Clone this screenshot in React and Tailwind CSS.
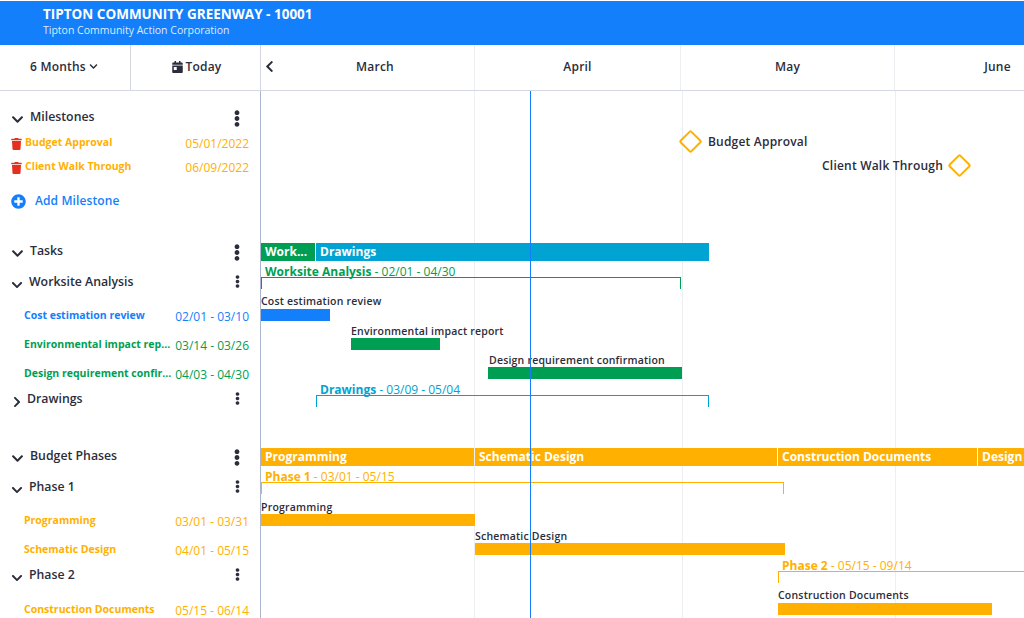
import { FaCalendarDay, FaChevronDown, FaChevronLeft, FaChevronRight, FaEllipsisV, FaPlusCircle, FaTrash } from 'react-icons/fa';

function Section({ open = true, title, size = 'big', className = '' }) {
  const big = size === 'big';
  return (
    <div className={`flex h-6 items-center pl-[11px] pr-[15px] ${className}`}>
      {open ? (
        <FaChevronDown className={big ? 'mr-[6px] mt-[2px] h-[13px] w-[13px] text-[#2b2d3a]' : 'mr-[6px] mt-[3px] h-[12px] w-[12px] text-[#2b2d3a]'} />
      ) : (
        <FaChevronRight className="mr-[4px] mt-[3px] h-[12px] w-[12px] text-[#2b2d3a]" />
      )}
      <span className="mb-[1px] flex-1 text-[12.3px] font-semibold text-[#2b2d3a]">{title}</span>
      <span className="flex w-4 justify-center">
        <FaEllipsisV className={big ? 'h-[17px] w-[17px] text-[#2b2d3a]' : 'mb-[3px] h-[13px] w-[13px] text-[#2b2d3a]'} />
      </span>
    </div>
  );
}

function Item({ name, dates, color, className = '' }) {
  return (
    <div className={`flex h-6 items-center justify-between pl-[24px] pr-[11px] ${color} ${className}`}>
      <span className="mb-[1px] whitespace-nowrap text-[10.5px] font-bold">{name}</span>
      <span className="mt-[2px] text-[12px]">{dates}</span>
    </div>
  );
}

function Milestone({ name, date, className = '' }) {
  return (
    <div className={`flex h-6 items-center justify-between px-[11px] text-[#ffb000] ${className}`}>
      <span className="flex items-center">
        <FaTrash className="mr-[3px] mt-[2px] h-[12px] w-[11px] text-[#e3301f]" />
        <span className="text-[10.5px] font-bold">{name}</span>
      </span>
      <span className="mt-[1px] text-[12px]">{date}</span>
    </div>
  );
}

function Sidebar() {
  return (
    <aside className="h-full w-[261px] shrink-0 border-r border-[#aab6cf] pt-[15px]">
      <Section title="Milestones" />
      <Milestone name="Budget Approval" date="05/01/2022" className="mt-[1px]" />
      <Milestone name="Client Walk Through" date="06/09/2022" />
      <div className="mt-[10px] flex h-6 items-center pl-[11px]">
        <FaPlusCircle className="mr-[9px] h-[15px] w-[15px] text-[#147ffb]" />
        <span className="text-[12px] font-semibold tracking-[0.1px] text-[#147ffb]">Add Milestone</span>
      </div>

      <Section title="Tasks" className="mt-[27px]" />
      <Section title="Worksite Analysis" size="small" className="mt-[7px]" />
      <Item name="Cost estimation review" dates="02/01 - 03/10" color="text-[#147ffb]" className="mt-[9px]" />
      <Item name="Environmental impact rep..." dates="03/14 - 03/26" color="text-[#009e52]" className="mt-[5px]" />
      <Item name="Design requirement confir..." dates="04/03 - 04/30" color="text-[#009e52]" className="mt-[5px]" />
      <Section open={false} title="Drawings" size="small" className="mt-[2px]" />

      <Section title="Budget Phases" className="mt-[33px]" />
      <Section title="Phase 1" size="small" className="mt-[7px]" />
      <Item name="Programming" dates="03/01 - 03/31" color="text-[#ffb000]" className="mt-[9px]" />
      <Item name="Schematic Design" dates="04/01 - 05/15" color="text-[#ffb000]" className="mt-[5px]" />
      <Section title="Phase 2" size="small" className="mt-[2px]" />
      <Item name="Construction Documents" dates="05/15 - 06/14" color="text-[#ffb000]" className="mt-[10px]" />
    </aside>
  );
}

function Bar({ className }) {
  return <div className={`absolute h-[12px] ${className}`} />;
}

function Band({ label, className }) {
  return (
    <div className={`flex h-full shrink-0 items-center overflow-hidden whitespace-nowrap pl-[4px] text-[12px] font-bold text-white ${className}`}>
      {label}
    </div>
  );
}

function TaskLabel({ children, className }) {
  return <div className={`absolute whitespace-nowrap text-[10.5px] font-semibold leading-[14px] tracking-[0.2px] text-[#2b2d3a] ${className}`}>{children}</div>;
}

function GroupLabel({ name, dates, className }) {
  return (
    <div className={`absolute whitespace-nowrap text-[12px] leading-[14px] ${className}`}>
      <span className="font-bold">{name}</span> - {dates}
    </div>
  );
}

function Bracket({ className }) {
  return <div className={`absolute h-[12px] border-x border-t ${className}`} />;
}

function Diamond({ className }) {
  return <div className={`absolute h-[17px] w-[17px] rotate-45 rounded-[2px] border-2 border-[#ffb000] bg-white ${className}`} />;
}

function Chart() {
  return (
    <div className="relative h-full flex-1 overflow-hidden">
      <div className="absolute left-[213px] top-0 h-full w-px bg-[#eceef2]" />
      <div className="absolute left-[421px] top-0 h-full w-px bg-[#eceef2]" />
      <div className="absolute left-[634px] top-0 h-full w-px bg-[#eceef2]" />

      <Diamond className="left-[421px] top-[42px]" />
      <div className="absolute left-[447px] top-[42px] whitespace-nowrap text-[12px] font-semibold leading-[18px] tracking-[0.2px] text-[#2b2d3a]">Budget Approval</div>
      <div className="absolute right-[81px] top-[66px] whitespace-nowrap text-[12px] font-semibold leading-[18px] tracking-[0.2px] text-[#2b2d3a]">Client Walk Through</div>
      <Diamond className="left-[690px] top-[66px]" />

      <div className="absolute left-0 top-[152px] flex h-[18px] gap-px">
        <Band label="Work..." className="w-[54px] bg-[#009e52]" />
        <Band label="Drawings" className="w-[393px] bg-[#00a3d1]" />
      </div>

      <GroupLabel name="Worksite Analysis" dates="02/01 - 04/30" className="left-[4px] top-[174px] text-[#009e52]" />
      <Bracket className="left-0 top-[186px] w-[420px] border-[#009e52]" />
      <TaskLabel className="left-0 top-[203px]">Cost estimation review</TaskLabel>
      <Bar className="left-0 top-[218px] w-[69px] bg-[#147ffb]" />
      <TaskLabel className="left-[90px] top-[233px]">Environmental impact report</TaskLabel>
      <Bar className="left-[90px] top-[247px] w-[89px] bg-[#009e52]" />
      <TaskLabel className="left-[228px] top-[262px]">Design requirement confirmation</TaskLabel>
      <Bar className="left-[227px] top-[276px] w-[194px] bg-[#009e52]" />
      <GroupLabel name="Drawings" dates="03/09 - 05/04" className="left-[59px] top-[292px] text-[#00a3d1]" />
      <Bracket className="left-[55px] top-[304px] w-[393px] border-[#00a3d1]" />

      <div className="absolute left-0 top-[357px] flex h-[18px] gap-px">
        <Band label="Programming" className="w-[213px] bg-[#ffb000]" />
        <Band label="Schematic Design" className="w-[302px] bg-[#ffb000]" />
        <Band label="Construction Documents" className="w-[199px] bg-[#ffb000]" />
        <Band label="Design" className="w-[60px] bg-[#ffb000]" />
      </div>

      <GroupLabel name="Phase 1" dates="03/01 - 05/15" className="left-[4px] top-[379px] text-[#ffb000]" />
      <Bracket className="left-0 top-[391px] w-[523px] border-[#ffb000]" />
      <TaskLabel className="left-0 top-[409px]">Programming</TaskLabel>
      <Bar className="left-0 top-[423px] w-[214px] bg-[#ffb000]" />
      <TaskLabel className="left-[214px] top-[438px]">Schematic Design</TaskLabel>
      <Bar className="left-[214px] top-[452px] w-[310px] bg-[#ffb000]" />
      <GroupLabel name="Phase 2" dates="05/15 - 09/14" className="left-[521px] top-[468px] text-[#ffb000]" />
      <Bracket className="left-[517px] top-[480px] w-[400px] border-[#ffb000]" />
      <TaskLabel className="left-[517px] top-[497px]">Construction Documents</TaskLabel>
      <Bar className="left-[517px] top-[512px] w-[214px] bg-[#ffb000]" />

      <div className="absolute left-[269px] top-0 h-full w-px bg-[#147ffb]" />
    </div>
  );
}

export default function App() {
  return (
    <div className="flex h-[618px] w-[1024px] flex-col overflow-hidden bg-white font-['Open_Sans',sans-serif]">
      <header className="mt-px flex h-[44px] shrink-0 flex-col justify-center bg-[#147ffb] pb-[4px] pl-[43px] text-white">
        <div className="text-[13.5px] font-bold leading-[18px]">TIPTON COMMUNITY GREENWAY - 10001</div>
        <div className="text-[10.5px] leading-[14px] text-[#dcebff]">Tipton Community Action Corporation</div>
      </header>

      <div className="flex h-[46px] shrink-0 border-b border-[#d5d8e2] text-[12px] font-semibold tracking-[0.2px] text-[#2b2d3a]">
        <div className="flex w-[131px] items-center justify-center border-r border-[#d5d8e2] pb-[2px] pr-[2px]">
          6 Months
          <FaChevronDown className="ml-[3px] h-[9px] w-[9px]" />
        </div>
        <div className="flex w-[130px] items-center justify-center border-r border-[#d5d8e2] pb-[2px] pl-[2px]">
          <FaCalendarDay className="mr-[3px] h-[12px] w-[11px]" />
          Today
        </div>
        <div className="flex min-w-0 flex-1 overflow-hidden pb-[2px]">
          <div className="flex w-[15px] shrink-0 items-center justify-end">
            <FaChevronLeft className="h-[13px] w-[13px]" />
          </div>
          <div className="flex w-[198px] shrink-0 items-center justify-center">March</div>
          <div className="mb-[-2px] flex w-[207px] shrink-0 items-center justify-center border-x border-[#eceef2] pb-[2px]">April</div>
          <div className="mb-[-2px] flex w-[214px] shrink-0 items-center justify-center border-r border-[#eceef2] pb-[2px]">May</div>
          <div className="flex w-[205px] shrink-0 items-center justify-center">June</div>
        </div>
      </div>

      <div className="flex min-h-0 flex-1">
        <Sidebar />
        <Chart />
      </div>
    </div>
  );
}
